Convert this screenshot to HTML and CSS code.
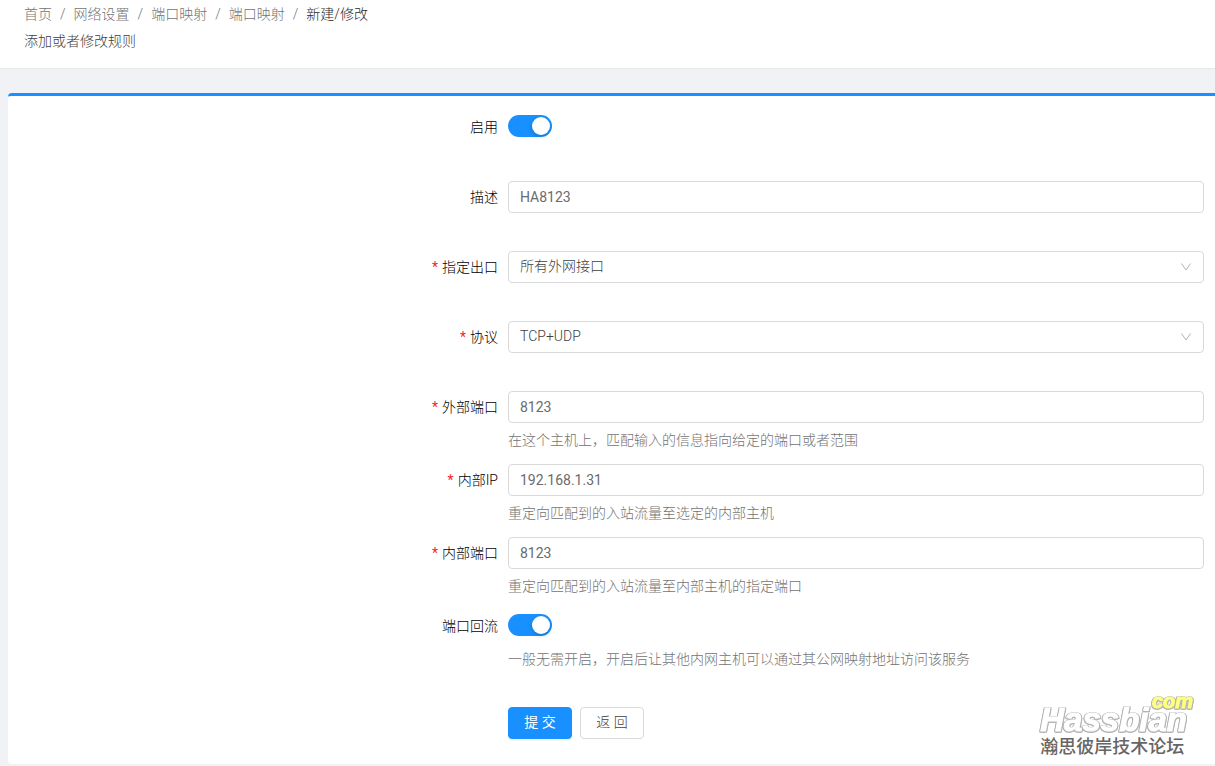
FILE: index.html
```html
<!DOCTYPE html>
<html lang="zh-CN">
<head>
<meta charset="utf-8">
<meta name="viewport" content="width=device-width, initial-scale=1">
<title>端口映射</title>
<link rel="stylesheet" href="styles.css">
</head>
<body>
<header class="page-header">
  <nav class="breadcrumb" aria-label="breadcrumb">
    <a href="#">首页</a><span class="separator">/</span><a href="#">网络设置</a><span class="separator">/</span><a href="#">端口映射</a><span class="separator">/</span><a href="#">端口映射</a><span class="separator">/</span><span class="current">新建/修改</span>
  </nav>
  <p class="summary">添加或者修改规则</p>
</header>
<main class="card">
  <form class="form">
    <div class="row">
      <label class="label" for="enabled">启用</label>
      <div class="control"><input class="switch" type="checkbox" id="enabled" checked></div>
    </div>
    <div class="row">
      <label class="label" for="desc">描述</label>
      <div class="control"><input class="field" type="text" id="desc" value="HA8123"></div>
    </div>
    <div class="row">
      <label class="label required" for="iface">指定出口</label>
      <div class="control select-wrap">
        <select class="field" id="iface"><option>所有外网接口</option></select>
        <svg class="chevron" viewBox="0 0 12 12" aria-hidden="true"><path d="M1.500 2.500 6 9l4.500-6.500"/></svg>
      </div>
    </div>
    <div class="row">
      <label class="label required" for="proto">协议</label>
      <div class="control select-wrap">
        <select class="field" id="proto"><option>TCP+UDP</option></select>
        <svg class="chevron" viewBox="0 0 12 12" aria-hidden="true"><path d="M1.500 2.500 6 9l4.500-6.500"/></svg>
      </div>
    </div>
    <div class="row has-help">
      <label class="label required" for="ext-port">外部端口</label>
      <div class="control"><input class="field" type="text" id="ext-port" value="8123"></div>
      <p class="help">在这个主机上，匹配输入的信息指向给定的端口或者范围</p>
    </div>
    <div class="row has-help">
      <label class="label required" for="int-ip">内部IP</label>
      <div class="control"><input class="field" type="text" id="int-ip" value="192.168.1.31"></div>
      <p class="help">重定向匹配到的入站流量至选定的内部主机</p>
    </div>
    <div class="row has-help">
      <label class="label required" for="int-port">内部端口</label>
      <div class="control"><input class="field" type="text" id="int-port" value="8123"></div>
      <p class="help">重定向匹配到的入站流量至内部主机的指定端口</p>
    </div>
    <div class="row has-help">
      <label class="label" for="loopback">端口回流</label>
      <div class="control"><input class="switch" type="checkbox" id="loopback" checked></div>
      <p class="help">一般无需开启，开启后让其他内网主机可以通过其公网映射地址访问该服务</p>
    </div>
    <div class="row actions">
      <div class="buttons">
        <button class="button primary" type="submit">提 交</button>
        <button class="button" type="button">返 回</button>
      </div>
    </div>
  </form>
  <div class="watermark">
    <span class="brand-suffix">com</span>
    <span class="brand">Hassbian</span>
    <span class="brand-name">瀚思彼岸技术论坛</span>
  </div>
</main>
</body>
</html>
```
FILE: styles.css
```css
* {
  box-sizing: border-box;
}

body {
  margin: 0;
  background: #f0f2f5;
  color: #404040;
  font: 14px/22px Roboto, "Noto Sans CJK SC", sans-serif;
}

p {
  margin: 0;
}

.page-header {
  padding: 3px 24px 16px;
  background: #fff;
  border-bottom: 1px solid #e8e8e8;
}

.breadcrumb,
.help,
.label,
.summary,
.button,
select.field {
  font-weight: 300;
}

.breadcrumb {
  display: flex;
  margin-bottom: 5px;
  color: #737373;
}

.breadcrumb a {
  color: inherit;
  text-decoration: none;
}

.separator {
  margin: 0 8px;
}

.current {
  color: #262626;
}

.card {
  position: relative;
  margin: 24px 0 2px 8px;
  padding: 15px 11px 25px 0;
  background: #fff;
  border-top: 3px solid #1890ff;
  border-radius: 4px 0 0 4px;
}

.row {
  display: grid;
  grid-template-columns: 245fr 348fr;
  column-gap: 10px;
  margin-bottom: 38px;
}

.row.has-help {
  margin-bottom: 13px;
}

.label {
  color: #000;
  line-height: 32px;
  text-align: right;
}

.required::before {
  content: "*";
  margin-right: 4px;
  color: #f5222d;
  font-weight: 400;
}

.control {
  display: flex;
  height: 32px;
}

.field {
  width: 100%;
  height: 32px;
  margin: 0;
  padding: 0 11px;
  border: 1px solid #d9d9d9;
  border-radius: 4px;
  background: #fff;
  color: #6b6b6b;
  font: inherit;
}

.select-wrap {
  position: relative;
}

select.field {
  appearance: none;
  padding-bottom: 2px;
  color: #404040;
}

.chevron {
  position: absolute;
  top: 10px;
  right: 12px;
  width: 12px;
  height: 12px;
  fill: none;
  stroke: #b3b3b3;
  pointer-events: none;
}

.switch {
  appearance: none;
  width: 44px;
  height: 22px;
  margin: 4px 0;
  padding: 2px;
  border-radius: 11px;
  background: #1890ff;
}

.switch::before {
  content: "";
  display: block;
  width: 18px;
  height: 18px;
  margin-left: auto;
  border-radius: 50%;
  background: #fff;
  box-shadow: 0 2px 4px rgba(0, 35, 11, 0.2);
}

.help {
  grid-column: 2;
  margin-top: 6px;
  color: #737373;
}

.row.actions {
  margin: 37px 0 0;
}

.buttons {
  display: flex;
  grid-column: 2;
  gap: 8px;
}

.button {
  min-width: 64px;
  height: 32px;
  padding: 0 15px 5px;
  border: 1px solid #d9d9d9;
  border-radius: 4px;
  background: #fff;
  color: #404040;
  font-family: inherit;
  font-size: 14px;
}

.primary {
  border-color: #1890ff;
  background: #1890ff;
  color: #fff;
  font-weight: 400;
  box-shadow: 0 2px 0 rgba(0, 0, 0, 0.04);
}

.watermark {
  position: absolute;
  right: 28px;
  bottom: 6px;
  display: flex;
  flex-direction: column;
  font-family: "Liberation Sans", "Noto Sans CJK SC", sans-serif;
}

.brand,
.brand-suffix {
  font-style: italic;
  font-weight: 700;
  color: #fff;
  -webkit-text-stroke: 1px #fff;
  filter: drop-shadow(1px 0 0 #b3b3b3) drop-shadow(-1px 0 0 #b3b3b3) drop-shadow(0 1px 0 #b3b3b3);
}

.brand {
  font-size: 33px;
  line-height: 32px;
}

.brand-suffix {
  align-self: flex-end;
  margin: 0 -6px -6px 0;
  color: #ffff80;
  font-size: 20px;
  line-height: 18px;
  -webkit-text-stroke-color: #ffff80;
}

.brand-name {
  color: #666;
  font-size: 18px;
  font-weight: 500;
  line-height: 22px;
}
```
